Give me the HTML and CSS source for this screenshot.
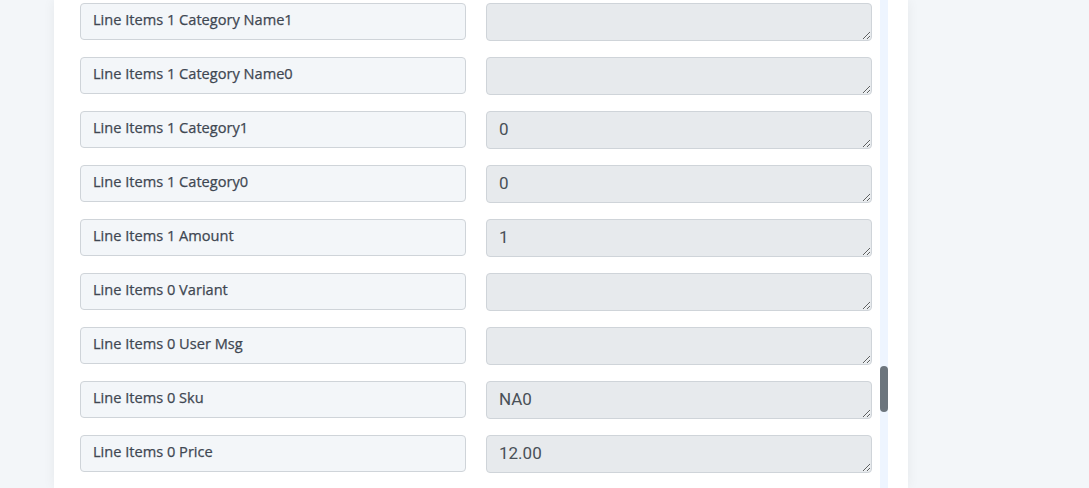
FILE: index.html
```html
<!DOCTYPE html>
<html>
<head>
<meta charset="utf-8">
<link rel="stylesheet" href="styles.css">
</head>
<body>
<div class="page">
  <div class="card">
    <div class="fields">
      <div class="row"><div class="label">Line Items 1 Category Name1</div><textarea class="value"></textarea></div>
      <div class="row"><div class="label">Line Items 1 Category Name0</div><textarea class="value"></textarea></div>
      <div class="row"><div class="label">Line Items 1 Category1</div><textarea class="value">0</textarea></div>
      <div class="row"><div class="label">Line Items 1 Category0</div><textarea class="value">0</textarea></div>
      <div class="row"><div class="label">Line Items 1 Amount</div><textarea class="value">1</textarea></div>
      <div class="row"><div class="label">Line Items 0 Variant</div><textarea class="value"></textarea></div>
      <div class="row"><div class="label">Line Items 0 User Msg</div><textarea class="value"></textarea></div>
      <div class="row"><div class="label">Line Items 0 Sku</div><textarea class="value">NA0</textarea></div>
      <div class="row"><div class="label">Line Items 0 Price</div><textarea class="value">12.00</textarea></div>
    </div>
    <div class="track"><div class="thumb"></div></div>
  </div>
</div>
</body>
</html>
```
FILE: styles.css
```css
html, body {
  margin: 0;
  padding: 0;
  height: 100%;
  overflow: hidden;
}
body {
  background: #f3f6f9;
}
.page {
  display: flex;
  height: 488px;
  padding-left: 54px;
}
.card {
  width: 854px;
  background: #ffffff;
  box-shadow: 0 0 12px rgba(0, 0, 0, 0.06);
  display: flex;
  align-items: flex-start;
  padding-left: 26px;
  box-sizing: border-box;
}
.fields {
  display: flex;
  flex-direction: column;
  gap: 16px;
  padding-top: 3px;
  width: 792px;
}
.row {
  display: flex;
  gap: 20px;
  align-items: flex-start;
}
.label {
  width: 386px;
  height: 37px;
  box-sizing: border-box;
  background: #f3f6f9;
  border: 1px solid #cfd4d9;
  border-radius: 4px;
  padding: 5px 12px;
  font-family: "Open Sans", sans-serif;
  font-weight: 400;
  font-size: 14.6px;
  color: #3f4752;
  -webkit-text-stroke: 0.25px #3f4752;
}
.value {
  width: 386px;
  height: 38px;
  box-sizing: border-box;
  background: #e7eaed;
  border: 1px solid #cfd4d9;
  border-radius: 4px;
  padding: 7px 12px 6px 12px;
  font-family: Roboto, sans-serif;
  font-size: 17px;
  color: #495057;
  margin: 0;
  display: block;
  outline: none;
}
.track {
  margin-left: 8px;
  width: 8px;
  height: 488px;
  background: #eef5ff;
  padding-top: 366px;
  box-sizing: border-box;
}
.thumb {
  height: 46px;
  width: 8px;
  border-radius: 4px;
  background: #6c757d;
}
```
